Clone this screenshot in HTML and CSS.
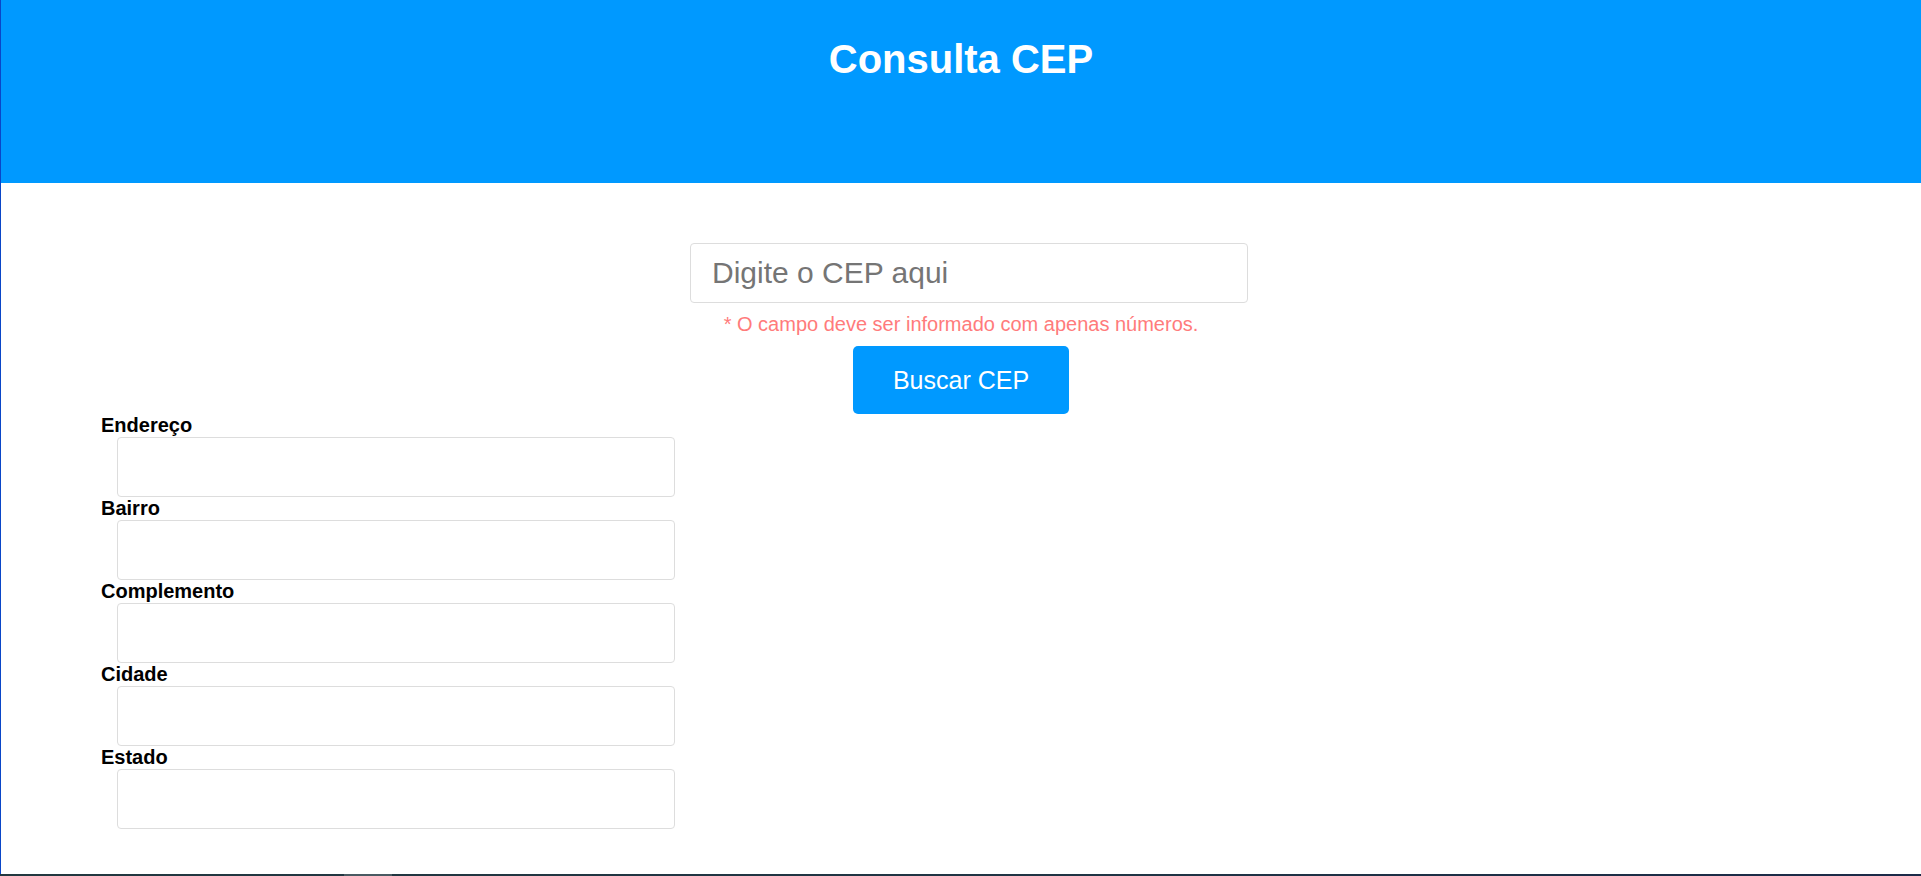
FILE: index.html
```html
<!DOCTYPE html>
<html lang="pt-BR">
<head>
<meta charset="utf-8">
<title>Consulta CEP</title>
<link rel="stylesheet" href="styles.css">
</head>
<body>
<div class="frame">
  <header class="topbar">
    <h1 class="title">Consulta CEP</h1>
  </header>
  <main class="content">
    <form class="search">
      <input class="field cep" type="text" placeholder="Digite o CEP aqui">
      <p class="hint">* O campo deve ser informado com apenas números.</p>
      <button class="btn" type="button">Buscar CEP</button>
    </form>
    <section class="results">
      <label class="label">Endereço</label>
      <input class="field" type="text">
      <label class="label">Bairro</label>
      <input class="field" type="text">
      <label class="label">Complemento</label>
      <input class="field" type="text">
      <label class="label">Cidade</label>
      <input class="field" type="text">
      <label class="label">Estado</label>
      <input class="field" type="text">
    </section>
  </main>
</div>
<div class="taskbar"><span class="taskbar-seg"></span></div>
</body>
</html>
```

FILE: styles.css
```css
* { box-sizing: border-box; }
html, body {
  margin: 0;
  padding: 0;
  height: 100%;
  overflow: hidden;
  background: #ffffff;
  font-family: "Liberation Sans", Arial, sans-serif;
}
.frame {
  height: 874px;
  border-left: 1px solid #0a46c8;
  display: flex;
  flex-direction: column;
}
.topbar {
  height: 183px;
  background: #0099ff;
  padding-top: 36px;
  flex: none;
}
.title {
  margin: 0;
  text-align: center;
  color: #ffffff;
  font-size: 40px;
  font-weight: bold;
  line-height: 46px;
}
.content {
  padding-top: 60px;
}
.search {
  display: flex;
  flex-direction: column;
  align-items: center;
  margin: 0;
}
.field {
  display: block;
  width: 558px;
  height: 60px;
  margin: 0 0 0 16px;
  padding: 0 21px;
  border: 1px solid #dddddd;
  border-radius: 4px;
  background: #ffffff;
  font-family: "Liberation Sans", Arial, sans-serif;
  font-size: 30px;
  color: #333333;
  outline: none;
}
.field::placeholder {
  color: #757575;
}
.hint {
  margin: 10px 0;
  font-size: 20px;
  line-height: 23px;
  color: #ff7b7b;
}
.btn {
  width: 216px;
  height: 68px;
  border: none;
  border-radius: 5px;
  background: #0099ff;
  color: #ffffff;
  font-family: "Liberation Sans", Arial, sans-serif;
  font-size: 25px;
  cursor: pointer;
}
.results {
  padding-left: 100px;
  display: flex;
  flex-direction: column;
  align-items: flex-start;
}
.label {
  display: block;
  font-size: 20px;
  line-height: 23px;
  font-weight: bold;
  color: #000000;
}
.taskbar {
  height: 2px;
  background: linear-gradient(to right, #22383f, #1f3344 60%, #1b2a48);
  position: relative;
}
.taskbar-seg {
  position: absolute;
  left: 344px;
  top: 0;
  width: 48px;
  height: 2px;
  background: #4a5a62;
}
```
